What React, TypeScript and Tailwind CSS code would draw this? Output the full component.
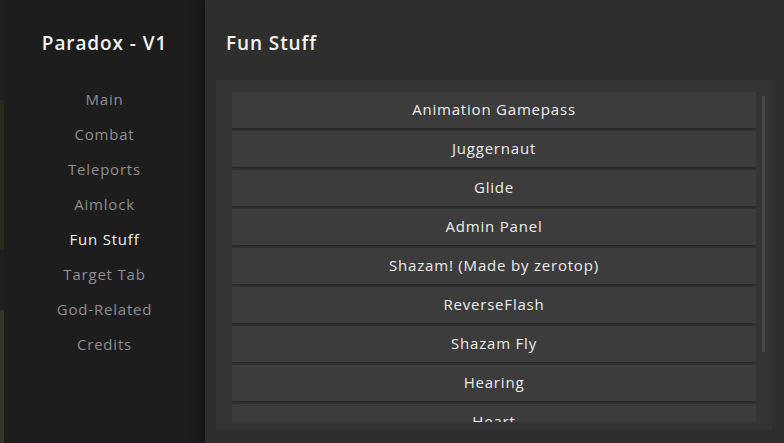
const tabs = ["Main", "Combat", "Teleports", "Aimlock", "Fun Stuff", "Target Tab", "God-Related", "Credits"];
const items = [
  "Animation Gamepass",
  "Juggernaut",
  "Glide",
  "Admin Panel",
  "Shazam! (Made by zerotop)",
  "ReverseFlash",
  "Shazam Fly",
  "Hearing",
  "Heart",
];

export default function App() {
  return (
    <div
      className="flex h-[443px] w-[784px] overflow-hidden bg-[#1d1d1e]"
      style={{ fontFamily: '"Open Sans", "Noto Sans", sans-serif' }}
    >
      {/* game world peeking through on the far left */}
      <div className="flex w-[4px] flex-col">
        <div className="h-[100px] bg-[#222020]" />
        <div className="h-[150px] bg-[#2a2a1c]" />
        <div className="h-[60px] bg-[#1f1f1d]" />
        <div className="flex-1 bg-[#34342a]" />
      </div>

      {/* sidebar */}
      <div className="flex w-[201px] flex-col items-center bg-[#1d1d1e]">
        <h1 className="mt-[29px] text-[19px] font-semibold tracking-[0.9px] text-[#f2f2f2]">Paradox - V1</h1>
        <div className="mt-[29px] flex flex-col items-center gap-[11px]">
          {tabs.map((t) => (
            <div
              key={t}
              className={
                t === "Fun Stuff"
                  ? "h-[24px] text-[15px] leading-[24px] font-medium tracking-[0.8px] text-[#f0f0f0]"
                  : "h-[24px] text-[15px] leading-[24px] font-medium tracking-[0.8px] text-[#8e8e8e]"
              }
            >
              {t}
            </div>
          ))}
        </div>
      </div>

      {/* main area */}
      <div className="flex flex-1 flex-col bg-[#2e2e2c] shadow-[-6px_0_10px_rgba(0,0,0,0.35)]">
        <h2 className="ml-[21px] mt-[29px] text-[19px] font-semibold tracking-[0.9px] text-[#f2f2f2]">Fun Stuff</h2>
        <div className="ml-[11px] mr-[12px] mt-[22px] flex h-[350px] bg-[#343434]">
          <div className="ml-[16px] mt-[12px] mb-[8px] flex w-[524px] flex-col gap-[3px] overflow-hidden">
            {items.map((it) => (
              <div
                key={it}
                className="flex h-[36px] shrink-0 items-center justify-center bg-[#3c3c3c] text-[15px] font-medium tracking-[0.8px] text-[#ececec] shadow-[0_1px_2px_rgba(0,0,0,0.35)]"
              >
                {it}
              </div>
            ))}
          </div>
          <div className="ml-[6px] mt-[16px] h-[256px] w-[3px] bg-[#464646]" />
        </div>
      </div>
    </div>
  );
}
